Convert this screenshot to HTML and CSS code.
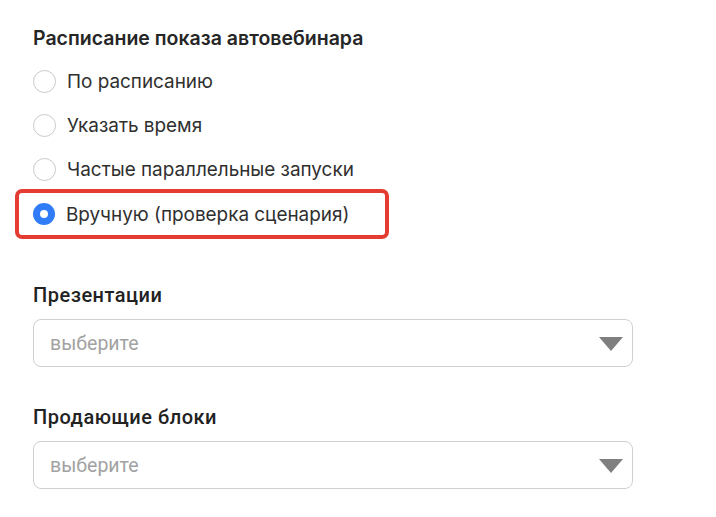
FILE: index.html
```html
<!DOCTYPE html>
<html lang="ru">
<head>
<meta charset="utf-8">
<title>Расписание</title>
<link rel="stylesheet" href="styles.css">
</head>
<body>
<div class="page">
  <section class="group">
    <h2 class="heading">Расписание показа автовебинара</h2>
    <div class="radios">
      <label class="radio"><span class="circle"></span><span class="text">По расписанию</span></label>
      <label class="radio"><span class="circle"></span><span class="text">Указать время</span></label>
      <label class="radio"><span class="circle"></span><span class="text">Частые параллельные запуски</span></label>
      <div class="highlight">
        <label class="radio checked"><span class="circle"></span><span class="text">Вручную (проверка сценария)</span></label>
      </div>
    </div>
  </section>

  <section class="field first">
    <div class="label">Презентации</div>
    <div class="select">
      <span class="placeholder">выберите</span>
      <span class="arrow"></span>
    </div>
  </section>

  <section class="field">
    <div class="label">Продающие блоки</div>
    <div class="select">
      <span class="placeholder">выберите</span>
      <span class="arrow"></span>
    </div>
  </section>
</div>
</body>
</html>
```

FILE: styles.css
```css
html, body {
  margin: 0;
  padding: 0;
  background: #ffffff;
}

.page {
  padding: 26px 0 0 33px;
  width: 600px;
  font-family: Inter, "Noto Sans", sans-serif;
  color: #2a2a2a;
}

.heading {
  margin: 0;
  font-size: 19.5px;
  line-height: 24px;
  font-weight: 600;
  color: #262626;
}

.radios {
  margin-top: 9px;
  display: flex;
  flex-direction: column;
}

.radio {
  height: 44px;
  display: flex;
  align-items: center;
  gap: 11px;
  font-size: 18.9px;
  color: #2f2f2f;
}

.circle {
  width: 23px;
  height: 23px;
  box-sizing: border-box;
  border: 1px solid #c9c9c9;
  border-radius: 50%;
  flex: none;
  background: #fff;
}

.highlight {
  margin: -2px 0 0 -18px;
  width: 374px;
  height: 50px;
  box-sizing: border-box;
  border: 4px solid #e43c33;
  border-radius: 7px;
  padding-left: 14px;
}

.highlight .radio {
  height: 42px;
}

.radio.checked .circle {
  width: 22px;
  height: 22px;
  border: 7px solid #2f7cf6;
}

.field.first {
  margin-top: 44px;
}

.field {
  margin-top: 38px;
}

.label {
  font-family: Roboto, sans-serif;
  font-weight: 500;
  font-size: 20px;
  line-height: 24px;
  color: #222;
  letter-spacing: 0.5px;
}

.select {
  margin-top: 12px;
  width: 600px;
  height: 48px;
  box-sizing: border-box;
  border: 1px solid #cfcfcf;
  border-radius: 8px;
  display: flex;
  align-items: center;
  justify-content: space-between;
  padding: 0 9px 0 16px;
}

.placeholder {
  font-family: Roboto, sans-serif;
  font-size: 19.5px;
  color: #a2a2a2;
}

.arrow {
  width: 0;
  height: 0;
  border-left: 12px solid transparent;
  border-right: 12px solid transparent;
  border-top: 14px solid #7f7f7f;
  margin-top: 2px;
}
```
